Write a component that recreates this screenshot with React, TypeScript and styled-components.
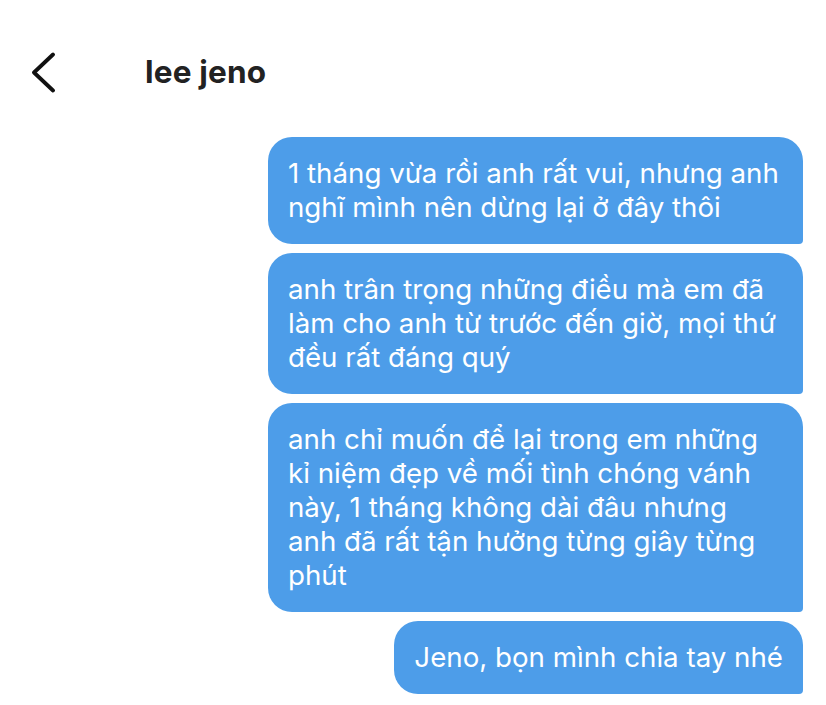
import { createGlobalStyle } from "styled-components";
import styled from "styled-components";

const GlobalStyle = createGlobalStyle`
  body {
    margin: 0;
    background: #ffffff;
    font-family: "Inter", "Noto Sans", sans-serif;
  }
`;

// each message is kept as its displayed lines
const messages = [
  ["1 tháng vừa rồi anh rất vui, nhưng anh", "nghĩ mình nên dừng lại ở đây thôi"],
  [
    "anh trân trọng những điều mà em đã",
    "làm cho anh từ trước đến giờ, mọi thứ",
    "đều rất đáng quý",
  ],
  [
    "anh chỉ muốn để lại trong em những",
    "kỉ niệm đẹp về mối tình chóng vánh",
    "này, 1 tháng không dài đâu nhưng",
    "anh đã rất tận hưởng từng giây từng",
    "phút",
  ],
  ["Jeno, bọn mình chia tay nhé"],
];

function App() {
  return (
    <Screen>
      <GlobalStyle />
      <Header>
        <BackButton aria-label="back">
          <svg width="26" height="42" viewBox="0 0 26 42" fill="none">
            <path
              d="M23 2.5 L4 20.5 L23 38.5"
              stroke="#111"
              strokeWidth="3.8"
              strokeLinecap="round"
              strokeLinejoin="round"
            />
          </svg>
        </BackButton>
        <Title>lee jeno</Title>
      </Header>
      <Thread>
        {messages.map((lines, i) => (
          <Bubble key={i} $wide={lines.length > 1}>
            {lines.map((l, j) => (
              <Line key={j}>{l}</Line>
            ))}
          </Bubble>
        ))}
      </Thread>
    </Screen>
  );
}

export default App;

const Screen = styled.div`
  width: 826px;
  height: 705px;
  overflow: hidden;
  background: #ffffff;
`;

const Header = styled.div`
  display: flex;
  align-items: center;
  height: 46px;
  padding: 50px 0 0 30px;
`;

const BackButton = styled.button`
  display: flex;
  align-items: center;
  border: none;
  background: none;
  padding: 0;
  width: 115px;
  cursor: pointer;
`;

const Title = styled.h1`
  margin: 0 0 4px;
  font-size: 31.5px;
  font-weight: 700;
  color: #222222;
  letter-spacing: 0.2px;
`;

const Thread = styled.div`
  display: flex;
  flex-direction: column;
  align-items: flex-end;
  gap: 9px;
  padding: 41px 23px 0 0;
`;

const Bubble = styled.div<{ $wide: boolean }>`
  box-sizing: border-box;
  width: ${(p) => (p.$wide ? "535px" : "auto")};
  padding: 19px 20px 20px;
  background: #4d9de9;
  color: #ffffff;
  font-size: 27.7px;
  line-height: 34px;
  border-radius: 24px 24px 4px 24px;
`;

const Line = styled.div`
  white-space: nowrap;
`;
